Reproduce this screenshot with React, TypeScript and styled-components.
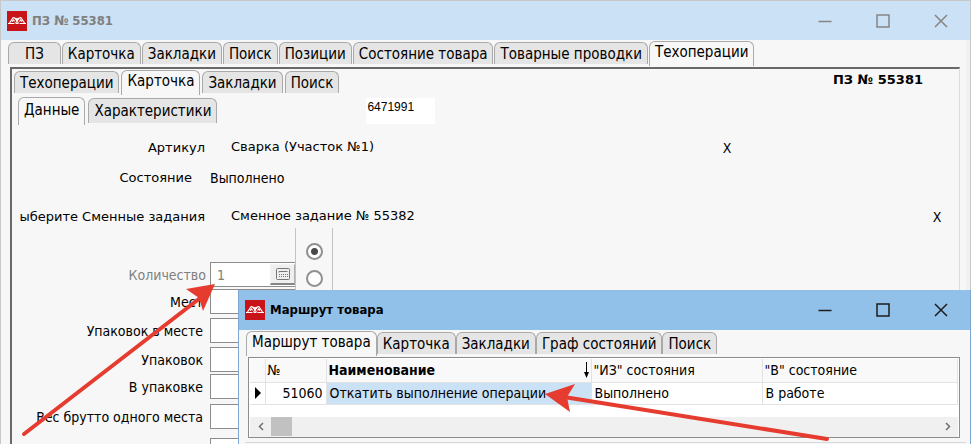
import React from "react";
import styled, { createGlobalStyle, css } from "styled-components";

const NARROW = `"DejaVu Sans Condensed", "DejaVu Sans", sans-serif`;
const WIDE = `"DejaVu Sans", sans-serif`;

const GlobalStyle = createGlobalStyle`
  * { box-sizing: border-box; }
  body { margin: 0; background: #f7f7f7; color: #000; font: 14px/20px ${NARROW}; }
  button, input { font: inherit; color: inherit; }
`;

const Desktop = styled.div`
  position: relative;
  height: 100vh;
  overflow: hidden;
`;

const MainWindow = styled.main`
  display: flex;
  flex-direction: column;
  height: 100%;
  border: 1px solid #c8c8c8;
  border-bottom: 0;
  background: #f7f7f7;
`;

const TitleBar = styled.header<{ $active?: boolean }>`
  display: flex;
  align-items: center;
  flex: none;
  height: ${(p) => (p.$active ? 40 : 39)}px;
  padding: 0 19px 0 6px;
  background: ${(p) => (p.$active ? "#91c1e9" : "#cbe1f5")};
  color: ${(p) => (p.$active ? "#000" : "#7f7f7f")};
`;

const Title = styled.h1`
  flex: 1;
  margin: 0 0 0 5px;
  font: bold 13px/20px ${NARROW};
`;

const WindowButtons = styled.div<{ $active?: boolean }>`
  display: flex;
  gap: 38px;
  color: ${(p) => (p.$active ? "#1c1c1c" : "#858585")};
`;

const WindowButton = styled.button`
  display: flex;
  align-items: center;
  justify-content: center;
  width: 20px;
  height: 20px;
  padding: 0;
  border: 0;
  background: none;
`;

const WindowBody = styled.div`
  display: flex;
  flex-direction: column;
  flex: 1;
  padding: 1px 6px 0 6px;
  border: solid #f1f1f1;
  border-width: 0 4px 0 0;
`;

const TabStrip = styled.div<{ $indent?: number; $gap?: number }>`
  display: flex;
  align-items: flex-start;
  flex: none;
  gap: ${(p) => p.$gap ?? 0}px;
  height: 26px;
  padding-left: ${(p) => p.$indent ?? 0}px;
`;

const TabButton = styled.button<{ $selected?: boolean; $wide?: boolean; $tall?: boolean }>`
  flex: none;
  height: 22px;
  margin-top: 1px;
  padding: 0 5px;
  border: solid #a9a9a9;
  border-width: 1px 1px 0 1px;
  border-radius: 6px 6px 0 0;
  background: #e5e5e5;
  font: 15px/20px ${NARROW};
  white-space: nowrap;
  ${(p) => p.$wide && css`padding: 0 16px;`}
  ${(p) => p.$tall && css`height: 25px;`}
  ${(p) =>
    p.$selected &&
    css`
      height: ${p.$tall ? 28 : 25}px;
      margin-top: 0;
      padding-bottom: 4px;
      background: #f7f7f7;
    `}
`;

const Panel = styled.section`
  flex: 1;
  margin-left: 3px;
  padding: 1px 0 0 2px;
  border: solid;
  border-width: 2px 1px 0 2px;
  border-color: #696969 #dcdcdc #696969 #696969;
`;

const PanelTop = styled.div`
  display: flex;
  justify-content: space-between;
`;

const OrderNumber = styled.strong`
  margin-right: 36px;
  font: bold 13px/20px ${WIDE};
`;

const SubTabs = styled.div`
  display: flex;
  align-items: flex-start;
  gap: 149px;
  padding-top: 1px;
`;

const Code = styled.output`
  width: 69px;
  height: 26px;
  margin-top: 1px;
  padding-left: 1px;
  background: #fff;
  font: 12px/18px "Liberation Sans", sans-serif;
`;

const Details = styled.dl`
  margin: 0;
  padding-top: 9px;
`;

const Detail = styled.div<{ $height: number; $before?: number }>`
  display: flex;
  align-items: center;
  height: ${(p) => p.$height}px;
  margin-top: ${(p) => p.$before ?? 0}px;
  font: 13px/20px ${WIDE};
`;

const DetailName = styled.dt<{ $short?: boolean }>`
  width: ${(p) => (p.$short ? 178 : 191)}px;
  text-align: right;
  white-space: nowrap;
`;

const DetailValue = styled.dd<{ $narrow?: boolean }>`
  flex: 1;
  margin: 0 0 0 ${(p) => (p.$narrow ? 18 : 26)}px;
  ${(p) => p.$narrow ? css`font: 14px/20px ${NARROW};` : css`padding-bottom: 3px;`}
`;

const ClearButton = styled.button<{ $right: number }>`
  width: 14px;
  margin-right: ${(p) => p.$right}px;
  padding: 0;
  border: 0;
  background: none;
  font: 14px/20px ${NARROW};
`;

const Lower = styled.div`
  display: flex;
`;

const Fields = styled.div`
  width: 281px;
  padding-top: 34px;
`;

const Field = styled.div<{ $after: number; $disabled?: boolean }>`
  display: flex;
  align-items: center;
  justify-content: flex-end;
  gap: 7px;
  height: 25px;
  margin-bottom: ${(p) => p.$after}px;
  white-space: nowrap;
  ${(p) => p.$disabled && css`gap: 4px; color: #808080;`}
`;

const FieldLabel = styled.label``;

const InputFrame = styled.div`
  display: flex;
  width: 85px;
  height: 25px;
  border: 1px solid #8c8c8c;
  border-right: 0;
  background: #fff;
`;

const Input = styled.input`
  flex: 1;
  min-width: 0;
  padding: 0 6px;
  border: 0;
  background: transparent;
`;

const CalcButton = styled.button`
  display: flex;
  align-items: center;
  justify-content: center;
  width: 25px;
  height: 21px;
  margin-top: 1px;
  padding: 0;
  border: 1px solid #f4f4f4;
  border-right-color: #b0b0b0;
  border-bottom: 2px solid #858585;
  background: #efefef;
`;

const RadioGroup = styled.div`
  display: flex;
  flex-direction: column;
  align-items: center;
  gap: 10px;
  width: 38px;
  height: 220px;
  padding-top: 15px;
  border: solid #c3c3c3;
  border-width: 0 1px;
`;

const Radio = styled.input`
  appearance: none;
  width: 17px;
  height: 17px;
  margin: 0;
  border: 2px solid #909090;
  border-radius: 50%;
  background: #fff;
  &:checked { background: radial-gradient(circle, #484848 3px, #fff 4px); }
`;

const RouteWindow = styled.section`
  position: absolute;
  top: 290px;
  left: 238px;
  right: 0;
  bottom: 0;
  display: flex;
  flex-direction: column;
  background: #f7f7f7;
  border: solid #7fa7d3;
  border-width: 0 1px;
`;

const RouteBody = styled.div`
  display: flex;
  flex-direction: column;
  flex: 1;
  padding: 1px 10px 0 7px;
`;

const GridFrame = styled.div`
  height: 81px;
  padding: 1px;
  margin-left: 2px;
  border: 1px solid #8c8c8c;
  background: #fff;
`;

const Table = styled.table`
  width: 100%;
  table-layout: fixed;
  border-collapse: collapse;
`;

const Col = styled.col<{ $width?: number }>`
  ${(p) => p.$width && css`width: ${p.$width}px;`}
`;

const cell = css`
  height: 22px;
  padding: 0 2px;
  border: solid #e2e2e2;
  border-width: 0 1px 1px 0;
  text-align: left;
  white-space: nowrap;
`;

const HeadCell = styled.th<{ $sorted?: boolean }>`
  ${cell}
  height: 23px;
  background: #f9f9f9;
  font-weight: ${(p) => (p.$sorted ? "bold" : "normal")};
`;

const SortHead = styled.div`
  display: flex;
  justify-content: space-between;
  align-items: center;
  height: 20px;
`;

const SortIcon = styled.svg`
  flex: none;
`;

const Cell = styled.td<{ $selected?: boolean; $right?: boolean }>`
  ${cell}
  padding: 0 3px;
  ${(p) => p.$selected && css`background: #cbe1f5;`}
  ${(p) => p.$right && css`text-align: right;`}
`;

const ScrollBar = styled.div`
  display: flex;
  align-items: center;
  height: 20px;
  margin-top: 12px;
  padding: 0 7px 0 8px;
  background: #f0f0f0;
`;

const ScrollThumb = styled.div`
  width: 21px;
  height: 19px;
  margin: 0 auto 0 7px;
  background: #c1c1c1;
`;

const BottomRule = styled.div`
  margin: 4px -6px 0 -1px;
  border-top: 1px solid #d8d8d8;
`;

const Icon = styled.svg`
  display: block;
  flex: none;
`;

const Annotations = styled.svg`
  position: absolute;
  top: 0;
  left: 0;
  pointer-events: none;
`;

const Logo = () => (
  <Icon width="20" height="20" viewBox="0 0 20 20" aria-hidden="true">
    <rect width="20" height="20" fill="#c81418" />
    <path
      d="M1 12.5H7.5M8.5 12.5H11.5M12.5 12.5H19M2.5 12L5.5 7.5Q6.5 6 7.5 7L11.5 12M8.5 12L12.5 7Q13.5 6 14.5 7.5L17.5 12M5 10.5L6.5 9L7.5 10.5M12.5 10.5L13.5 9L15 10.5M8.5 7L10 8.5L11.5 7"
      fill="none"
      stroke="#fff"
      strokeWidth="1.2"
    />
  </Icon>
);

const Controls = ({ active }: { active?: boolean }) => (
  <WindowButtons $active={active}>
    <WindowButton aria-label="Свернуть">
      <Icon width="14" height="14" stroke="currentColor" strokeWidth="1.5"><path d="M0.5 7.5H13.5" /></Icon>
    </WindowButton>
    <WindowButton aria-label="Развернуть">
      <Icon width="14" height="14" stroke="currentColor" strokeWidth="1.5" fill="none"><path d="M1 1H13V13H1Z" /></Icon>
    </WindowButton>
    <WindowButton aria-label="Закрыть">
      <Icon width="14" height="14" stroke="currentColor" strokeWidth="1.5"><path d="M1 1L13 13M13 1L1 13" /></Icon>
    </WindowButton>
  </WindowButtons>
);

interface TabsProps {
  items: string[];
  selected: string;
  indent?: number;
  gap?: number;
  wide?: string;
  tall?: boolean;
}

const Tabs = ({ items, selected, indent, gap, wide, tall }: TabsProps) => (
  <TabStrip role="tablist" $indent={indent} $gap={gap}>
    {items.map((t) => (
      <TabButton
        key={t}
        role="tab"
        aria-selected={t === selected}
        $selected={t === selected}
        $wide={t === wide}
        $tall={tall}
      >
        {t}
      </TabButton>
    ))}
  </TabStrip>
);

const FIELDS = [
  { id: "places", label: "Мест", after: 4 },
  { id: "packs-in-place", label: "Упаковок в месте", after: 4 },
  { id: "packs", label: "Упаковок", after: 2 },
  { id: "in-pack", label: "В упаковке", after: 5 },
  { id: "gross", label: "Вес брутто одного места", after: 9 },
];

export default function App() {
  return (
    <Desktop>
      <GlobalStyle />
      <MainWindow>
        <TitleBar>
          <Logo />
          <Title>ПЗ № 55381</Title>
          <Controls />
        </TitleBar>
        <WindowBody>
          <Tabs
            items={["ПЗ", "Карточка", "Закладки", "Поиск", "Позиции", "Состояние товара", "Товарные проводки", "Техоперации"]}
            selected="Техоперации"
            wide="ПЗ"
            indent={1}
            gap={1}
          />
          <Panel>
            <PanelTop>
              <Tabs items={["Техоперации", "Карточка", "Закладки", "Поиск"]} selected="Карточка" gap={2} />
              <OrderNumber>ПЗ № 55381</OrderNumber>
            </PanelTop>
            <SubTabs>
              <Tabs items={["Данные", "Характеристики"]} selected="Данные" indent={4} gap={3} tall />
              <Code>6471991</Code>
            </SubTabs>
            <Details>
              <Detail $height={30}>
                <DetailName>Артикул</DetailName>
                <DetailValue>Сварка (Участок №1)</DetailValue>
                <ClearButton $right={225} aria-label="Очистить артикул">X</ClearButton>
              </Detail>
              <Detail $height={30}>
                <DetailName $short>Состояние</DetailName>
                <DetailValue $narrow>Выполнено</DetailValue>
              </Detail>
              <Detail $height={22} $before={13}>
                <DetailName>ыберите Сменные задания</DetailName>
                <DetailValue>Сменное задание № 55382</DetailValue>
                <ClearButton $right={15} aria-label="Очистить задание">X</ClearButton>
              </Detail>
            </Details>
            <Lower>
              <Fields>
                <Field $after={2} $disabled>
                  <FieldLabel htmlFor="quantity">Количество</FieldLabel>
                  <InputFrame>
                    <Input id="quantity" defaultValue="1" />
                    <CalcButton aria-label="Калькулятор">
                      <Icon width="14" height="12" fill="none" stroke="#777">
                        <rect x="0.5" y="0.5" width="13" height="11" rx="1" />
                        <path d="M3 4.5V3.5H11.5" />
                        <path d="M3 6.5H12M3 8.5H12" strokeDasharray="1 1" />
                      </Icon>
                    </CalcButton>
                  </InputFrame>
                </Field>
                {FIELDS.map((f) => (
                  <Field key={f.id} $after={f.after}>
                    <FieldLabel htmlFor={f.id}>{f.label}</FieldLabel>
                    <InputFrame><Input id={f.id} /></InputFrame>
                  </Field>
                ))}
                <Field $after={0}>
                  <InputFrame><Input aria-label="Вес" /></InputFrame>
                </Field>
              </Fields>
              <RadioGroup role="radiogroup" aria-label="Режим">
                <Radio type="radio" name="mode" aria-label="Первый" defaultChecked />
                <Radio type="radio" name="mode" aria-label="Второй" />
              </RadioGroup>
            </Lower>
          </Panel>
        </WindowBody>
      </MainWindow>

      <RouteWindow aria-label="Маршрут товара">
        <TitleBar $active>
          <Logo />
          <Title as="h2">Маршрут товара</Title>
          <Controls active />
        </TitleBar>
        <RouteBody>
          <Tabs
            items={["Маршрут товара", "Карточка", "Закладки", "Граф состояний", "Поиск"]}
            selected="Маршрут товара"
          />
          <GridFrame>
            <Table>
              <colgroup>
                <Col $width={15} />
                <Col $width={61} />
                <Col $width={265} />
                <Col $width={171} />
                <Col />
              </colgroup>
              <thead>
                <tr>
                  <HeadCell />
                  <HeadCell>№</HeadCell>
                  <HeadCell $sorted>
                    <SortHead>
                      Наименование
                      <SortIcon width="5" height="16" viewBox="0 0 5 16"><path d="M2 0H3V10H5L2.5 16L0 10H2Z" /></SortIcon>
                    </SortHead>
                  </HeadCell>
                  <HeadCell>"ИЗ" состояния</HeadCell>
                  <HeadCell>"В" состояние</HeadCell>
                </tr>
              </thead>
              <tbody>
                <tr>
                  <Cell>
                    <Icon width="10" height="12" viewBox="0 0 10 12"><path d="M2 0L8 6L2 12Z" /></Icon>
                  </Cell>
                  <Cell $right>51060</Cell>
                  <Cell $selected>Откатить выполнение операции</Cell>
                  <Cell>Выполнено</Cell>
                  <Cell>В работе</Cell>
                </tr>
              </tbody>
            </Table>
            <ScrollBar>
              <Icon width="6" height="9" fill="none" stroke="#707070" strokeWidth="1.5"><path d="M5 1L1.5 4.5L5 8" /></Icon>
              <ScrollThumb />
              <Icon width="6" height="9" fill="none" stroke="#707070" strokeWidth="1.5"><path d="M1 1L4.5 4.5L1 8" /></Icon>
            </ScrollBar>
          </GridFrame>
          <BottomRule />
        </RouteBody>
      </RouteWindow>

      <Annotations width="971" height="444" viewBox="0 0 971 444" fill="#e63c30" aria-hidden="true">
        <path d="M24 434L204 295" stroke="#e63c30" strokeWidth="4" strokeLinecap="round" />
        <path d="M215 284L186 289L199 298L203 311Z" />
        <path d="M827 439L564 397" stroke="#e63c30" strokeWidth="4" strokeLinecap="round" />
        <path d="M545 394L575 384L567 397L570 412Z" />
      </Annotations>
    </Desktop>
  );
}
